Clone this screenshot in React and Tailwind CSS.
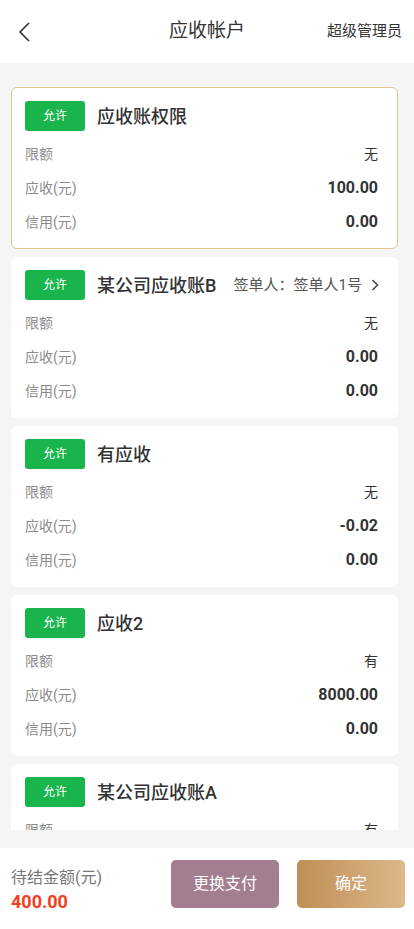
import React from 'react';

const accounts = [
  { name: '某公司应收账B', signer: '签单人：签单人1号', limit: '无', receivable: '0.00', credit: '0.00' },
  { name: '有应收', limit: '无', receivable: '-0.02', credit: '0.00' },
  { name: '应收2', limit: '有', receivable: '8000.00', credit: '0.00' },
  { name: '某公司应收账A', limit: '有', receivable: '0.00', credit: '0.00' },
];

function Row({ label, value, bold }) {
  return (
    <div className="flex h-[34px] items-center justify-between">
      <span className="text-[14px] text-[#8c8c8c]">{label}</span>
      {bold ? (
        <span className="text-[16px] font-bold text-[#333]">{value}</span>
      ) : (
        <span className="text-[14px] text-[#333]">{value}</span>
      )}
    </div>
  );
}

function AccountCard({ account, selected }) {
  return (
    <div
      className={
        selected
          ? 'rounded-[6px] border border-[#e3c593] bg-white pl-[13px] pr-[19px] pt-[13px] pb-[9px]'
          : 'rounded-[6px] bg-white pl-[14px] pr-[20px] pt-[13px] pb-[10px]'
      }
    >
      <div className="flex h-[30px] items-center">
        <div className="flex h-[30px] w-[60px] items-center justify-center rounded-[3px] bg-[#19b54c] text-[12px] text-white">
          允许
        </div>
        <div className="ml-3 text-[18px] font-medium text-[#333]">{account.name}</div>
        {account.signer && (
          <div className="ml-auto mr-[-4px] flex items-center text-[15px] text-[#555]">
            <span>{account.signer}</span>
            <svg width="14" height="14" viewBox="0 0 14 14" className="ml-[6px]">
              <path d="M4.5 2 L9.5 7 L4.5 12" fill="none" stroke="#444" strokeWidth="1.5" />
            </svg>
          </div>
        )}
      </div>
      <div className="mt-[6px]">
        <Row label="限额" value={account.limit} />
        <Row label="应收(元)" value={account.receivable} bold />
        <Row label="信用(元)" value={account.credit} bold />
      </div>
    </div>
  );
}

export default function App() {
  return (
    <div
      className="flex h-[929px] w-[414px] flex-col bg-[#f5f5f5]"
      style={{ fontFamily: 'Roboto, "Noto Sans CJK SC", "Noto Sans", sans-serif' }}
    >
      <header className="relative flex h-[63px] shrink-0 items-center justify-between bg-white px-[12px]">
        <svg width="24" height="24" viewBox="0 0 24 24" className="ml-[2px]">
          <path d="M15 3 L6 12 L15 21" fill="none" stroke="#333" strokeWidth="1.6" />
        </svg>
        <div className="absolute left-1/2 -translate-x-1/2 text-[19px] text-[#333]">应收帐户</div>
        <div className="text-[15px] text-[#333]">超级管理员</div>
      </header>

      <div className="h-[767px] shrink-0 overflow-hidden pt-[24px] pl-[11px] pr-[16px]">
        <div className="flex flex-col gap-[8px]">
          <AccountCard
            selected
            account={{ name: '应收账权限', limit: '无', receivable: '100.00', credit: '0.00' }}
          />
          {accounts.map((a, i) => (
            <AccountCard key={i} account={a} />
          ))}
        </div>
      </div>

      <div className="mt-auto flex h-[81px] shrink-0 items-start bg-white pr-[9px] pl-[11px]">
        <div className="mt-[18px] flex flex-col">
          <span className="text-[16px] leading-[24px] text-[#777]">待结金额(元)</span>
          <span className="text-[18px] font-bold leading-[24px] text-[#f2401d]">400.00</span>
        </div>
        <div className="mt-[12px] ml-auto flex gap-[18px]">
          <button className="flex h-[48px] w-[108px] items-center justify-center rounded-[5px] bg-[#a27e90] text-[16px] text-white">
            更换支付
          </button>
          <button className="flex h-[48px] w-[108px] items-center justify-center rounded-[5px] bg-gradient-to-r from-[#c08f57] to-[#dcb88a] text-[16px] text-white">
            确定
          </button>
        </div>
      </div>
    </div>
  );
}
